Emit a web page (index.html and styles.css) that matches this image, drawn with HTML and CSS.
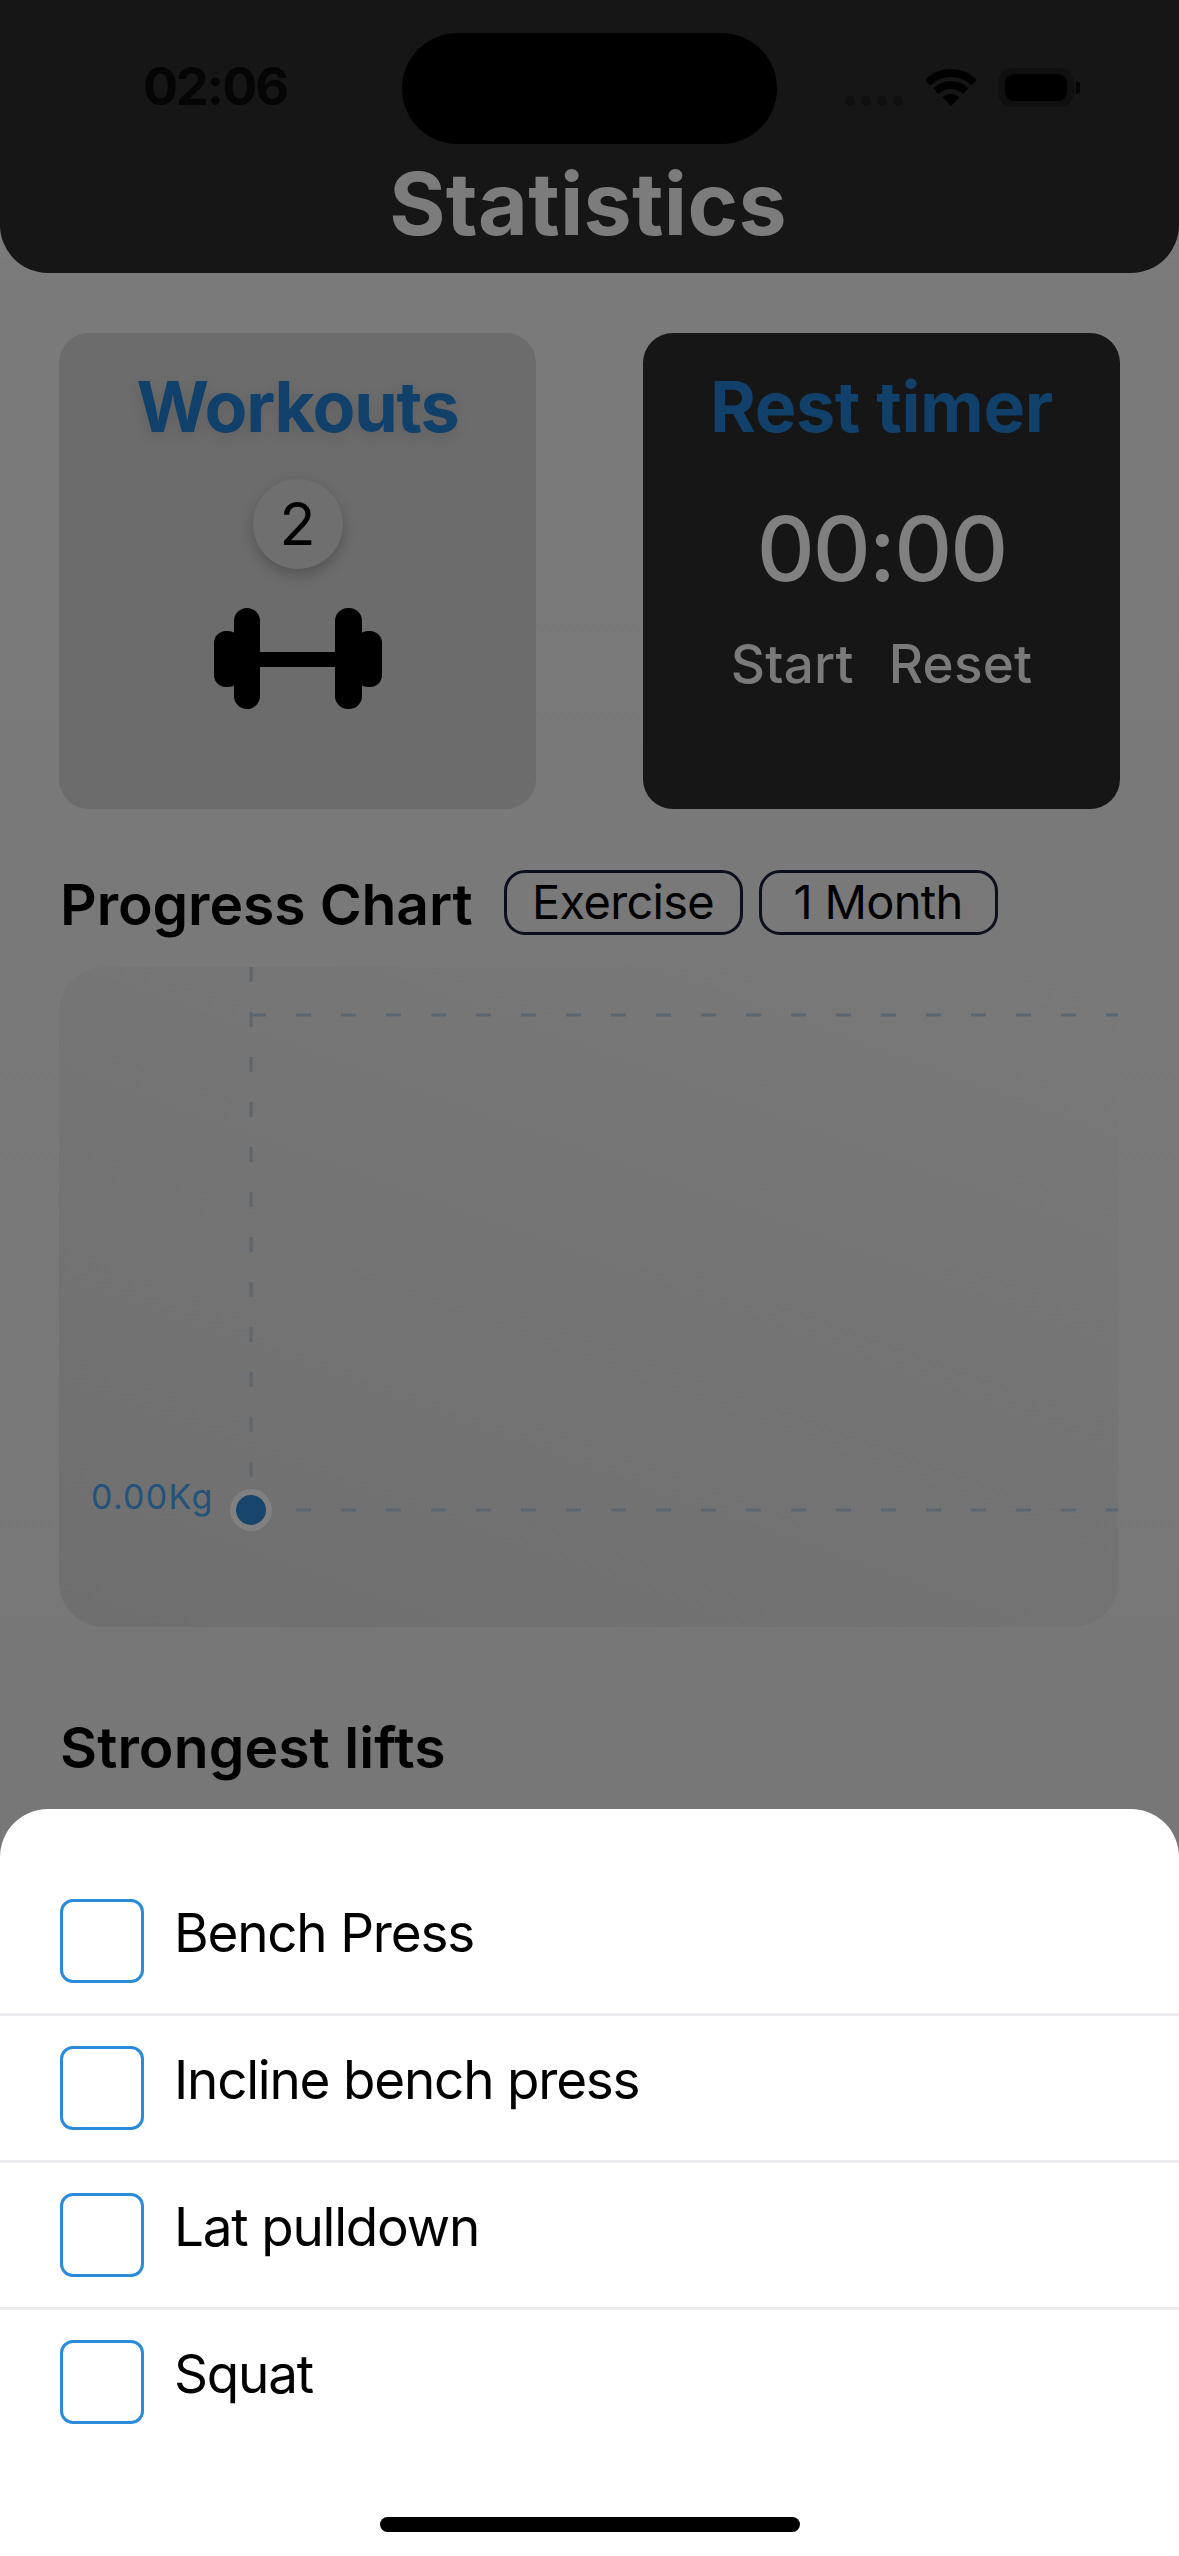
FILE: index.html
```html
<!DOCTYPE html>
<html lang="en">
<head>
    <meta charset="UTF-8">
    <title>Statistics</title>
    <link rel="stylesheet" href="styles.css">
</head>
<body>
    <div id="screen">
        <header class="top-bar">
            <div class="status-bar">
                <span class="clock">02:06</span>
                <div class="status-icons">
                    <div class="signal"><i></i><i></i><i></i><i></i></div>
                    <svg class="wifi" width="50" height="37" viewBox="0 0 50 37">
                        <path d="M1.7 13.7A33 33 0 0 1 48.3 13.7" fill="none" stroke="#000" stroke-width="8"/>
                        <path d="M10.2 22.2A21 21 0 0 1 39.8 22.2" fill="none" stroke="#000" stroke-width="8"/>
                        <path d="M25 37L16.5 28.5A12 12 0 0 1 33.5 28.5Z" fill="#000"/>
                    </svg>
                    <div class="battery"><i></i></div>
                    <span class="battery-nub"></span>
                </div>
            </div>
            <div class="island"></div>
            <h1 class="page-title">Statistics</h1>
        </header>

        <main class="content">
            <section class="cards">
                <div class="card workouts">
                    <h2 class="card-title shadowed">Workouts</h2>
                    <div class="count">2</div>
                    <svg class="dumbbell" width="168" height="101" viewBox="0 0 168 101">
                        <rect x="0" y="23" width="26" height="56" rx="12"/>
                        <rect x="142" y="23" width="26" height="56" rx="12"/>
                        <rect x="20" y="0" width="26" height="101" rx="13"/>
                        <rect x="121" y="0" width="27" height="101" rx="13"/>
                        <rect x="46" y="44" width="75" height="15"/>
                    </svg>
                </div>
                <div class="card timer">
                    <h2 class="card-title timer-title">Rest timer</h2>
                    <div class="time">00:00</div>
                    <div class="timer-actions">
                        <span>Start</span>
                        <span>Reset</span>
                    </div>
                </div>
            </section>

            <section class="chart-head">
                <h2 class="section-title">Progress Chart</h2>
                <span class="pill">Exercise</span>
                <span class="pill">1 Month</span>
            </section>

            <div class="chart">
                <svg width="1059" height="660" viewBox="0 0 1059 660">
                    <line class="grid" x1="192" y1="0" x2="192" y2="543"/>
                    <line class="grid" x1="192" y1="48" x2="1059" y2="48"/>
                    <line class="grid" x1="237" y1="543" x2="1059" y2="543"/>
                    <circle cx="192" cy="543" r="21" fill="#808080"/>
                    <circle cx="192" cy="543" r="15" fill="#17456c"/>
                    <text class="chart-label" x="32" y="542">0.00Kg</text>
                </svg>
            </div>

            <h2 class="section-title lifts-title">Strongest lifts</h2>
        </main>

        <div class="sheet">
            <ul class="exercise-list">
                <li><span class="checkbox"></span><span class="exercise-name">Bench Press</span></li>
                <li><span class="checkbox"></span><span class="exercise-name">Incline bench press</span></li>
                <li><span class="checkbox"></span><span class="exercise-name">Lat pulldown</span></li>
                <li><span class="checkbox"></span><span class="exercise-name">Squat</span></li>
            </ul>
            <div class="home-bar"></div>
        </div>
    </div>
</body>
</html>
```

FILE: styles.css
```css
*{
    padding: 0;
    margin: 0;
    box-sizing: border-box;
}
ul{
    list-style: none;
}
body{
    font-family: Inter, "Liberation Sans", sans-serif;
    background: #7a7a7a;
}
#screen{
    width: 1179px;
    height: 2556px;
    position: relative;
    overflow: hidden;
    background: linear-gradient(#7b7b7b, #777777 70%);
}

/* top bar */
.top-bar{
    height: 273px;
    background: #161616;
    border-radius: 0 0 48px 48px;
    position: relative;
}
.status-bar{
    height: 166px;
    padding: 0 99px 0 143px;
    display: flex;
    justify-content: space-between;
}
.clock{
    margin-top: 62px;
    font-size: 52px;
    line-height: 50px;
    font-weight: 700;
    letter-spacing: -2px;
    color: #050505;
}
.status-icons{
    display: flex;
    align-items: flex-start;
}
.signal{
    margin-top: 96px;
    margin-right: 23px;
    display: flex;
    gap: 6px;
}
.signal i{
    width: 10px;
    height: 10px;
    border-radius: 50%;
    background: #101010;
}
.wifi{
    margin-top: 69px;
    margin-right: 22px;
}
.battery{
    margin-top: 68px;
    width: 76px;
    height: 39px;
    padding: 5px 6px;
    border: 1px solid #101010;
    background: #101010;
    border-radius: 14px;
}
.battery i{
    display: block;
    height: 100%;
    background: #000;
    border-radius: 9px;
}
.battery-nub{
    margin-top: 81px;
    margin-left: 2px;
    width: 4px;
    height: 13px;
    background: #050505;
    border-radius: 0 6px 6px 0;
}
.island{
    position: absolute;
    left: 402px;
    top: 33px;
    width: 375px;
    height: 111px;
    background: #000;
    border-radius: 56px;
}
.page-title{
    font-size: 86px;
    line-height: 84px;
    font-weight: 700;
    letter-spacing: 0.3px;
    color: #7c7c7c;
    text-align: center;
    margin-top: -4px;
    padding-right: 3px;
}

/* cards */
.content{
    padding: 60px 59px 0;
}
.cards{
    display: flex;
    justify-content: space-between;
}
.card{
    width: 477px;
    height: 476px;
    border-radius: 30px;
    display: flex;
    flex-direction: column;
    align-items: center;
    padding-top: 34px;
}
.workouts{
    background: #6c6c6c;
}
.timer{
    background: #161616;
}
.card-title{
    font-size: 70px;
    line-height: 80px;
    font-weight: 700;
    letter-spacing: -1.2px;
    color: #11406a;
}
.timer-title{
    letter-spacing: -0.4px;
}
.shadowed{
    text-shadow: 0 4px 14px rgba(0,0,0,.12);
}
.count{
    width: 90px;
    height: 90px;
    margin-top: 32px;
    border-radius: 50%;
    background: #6f6f6f;
    box-shadow: 0 6px 14px rgba(0,0,0,.22);
    text-align: center;
    font-size: 59px;
    line-height: 90px;
    color: #000;
}
.dumbbell{
    margin-top: 39px;
}
.time{
    margin-top: 52px;
    font-size: 90px;
    line-height: 100px;
    font-weight: 450;
    letter-spacing: -2px;
    color: #808080;
}
.timer-actions{
    margin-top: 33px;
    display: flex;
    gap: 35px;
    font-size: 53px;
    line-height: 64px;
    font-weight: 500;
    letter-spacing: 0.2px;
    color: #7a7a7a;
}

/* progress chart */
.chart-head{
    margin-top: 61px;
    display: flex;
    align-items: center;
    gap: 16px;
    height: 65px;
}
.section-title{
    font-size: 57px;
    line-height: 66px;
    font-weight: 600;
    color: #000;
}
.chart-head .section-title{
    margin-right: 15px;
    padding-left: 1px;
    padding-top: 5px;
    letter-spacing: -0.1px;
}
.pill{
    width: 239px;
    height: 65px;
    border: 3px solid #0b0f1e;
    border-radius: 21px;
    font-size: 47px;
    line-height: 57px;
    letter-spacing: -0.7px;
    text-align: center;
    color: #000;
}
.chart{
    margin-top: 32px;
    height: 660px;
    width: 1059px;
    border-radius: 45px;
    background: linear-gradient(200deg, #797979, #6f6f6f);
    overflow: hidden;
}
.chart svg{
    display: block;
}
.grid{
    stroke: #5c6670;
    stroke-width: 3;
    stroke-dasharray: 15 30;
}
.chart-label{
    font-family: Inter, "Liberation Sans", sans-serif;
    font-size: 34px;
    letter-spacing: 1.3px;
    fill: #245278;
}
.lifts-title{
    margin-top: 88px;
    padding-left: 1px;
    letter-spacing: 0.1px;
}

/* bottom sheet */
.sheet{
    position: absolute;
    left: 0;
    right: 0;
    top: 1809px;
    bottom: 0;
    padding-top: 60px;
    background: #fff;
    border-radius: 48px 48px 0 0;
}
.exercise-list li{
    height: 147px;
    padding: 30px 60px 0;
    display: flex;
    gap: 30px;
    border-bottom: 3px solid #ececee;
}
.exercise-list li:last-child{
    border-bottom: none;
}
.checkbox{
    width: 84px;
    height: 84px;
    border: 3px solid #2b8bdb;
    border-radius: 13px;
}
.exercise-name{
    font-size: 53px;
    line-height: 68px;
    letter-spacing: -1.2px;
    color: #000;
}
.home-bar{
    position: absolute;
    left: 380px;
    bottom: 24px;
    width: 420px;
    height: 15px;
    border-radius: 8px;
    background: #000;
}
```
